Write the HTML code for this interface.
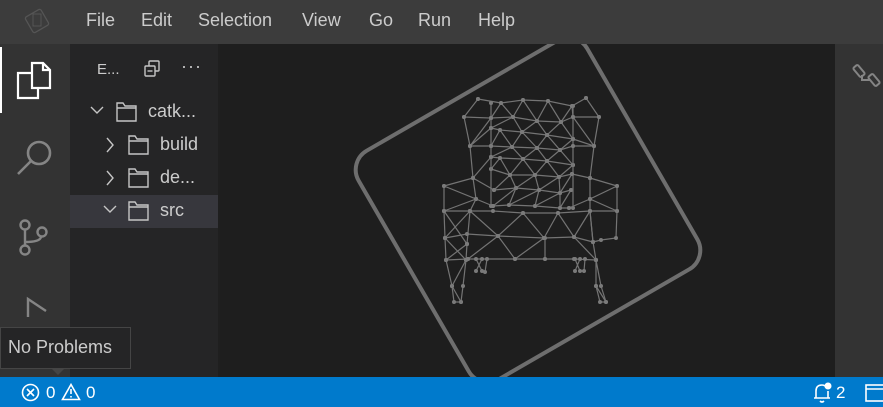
<!DOCTYPE html>
<html><head><meta charset="utf-8"><style>
*{margin:0;padding:0;box-sizing:border-box}
body{width:883px;height:407px;overflow:hidden;background:#1e1e1e;font-family:"Liberation Sans",Arial,sans-serif;position:relative}
.abs{position:absolute}
#title{left:0;top:0;width:883px;height:44px;background:#3c3c3c}
.menu{top:10px;font-size:18px;color:#cccccc}
#act{left:0;top:44px;width:70px;height:333px;background:#333333}
#side{left:70px;top:44px;width:150px;height:333px;background:#252526}
#right{left:835px;top:44px;width:48px;height:333px;background:#333333}
#status{left:0;top:377px;width:883px;height:30px;background:#007acc;color:#fff;font-size:17px}
</style></head><body>
<div id="title" class="abs"></div>
<svg class="abs" style="left:20px;top:4px" width="34" height="34" viewBox="0 0 34 34"><rect x="8" y="8" width="18" height="18" rx="2" transform="rotate(-30 17 17)" fill="none" stroke="#555" stroke-width="1.3"/><rect x="13" y="10" width="8" height="12" fill="none" stroke="#555" stroke-width="1"/></svg>
<div class="abs menu" style="left:86px">File</div>
<div class="abs menu" style="left:141px">Edit</div>
<div class="abs menu" style="left:198px">Selection</div>
<div class="abs menu" style="left:302px">View</div>
<div class="abs menu" style="left:369px">Go</div>
<div class="abs menu" style="left:418px">Run</div>
<div class="abs menu" style="left:478px">Help</div>

<div id="act" class="abs"></div>
<div class="abs" style="left:0;top:47px;width:2px;height:66px;background:#fff"></div>
<svg class="abs" style="left:14px;top:58px" width="40" height="44" viewBox="0 0 40 44" fill="none" stroke="#fff" stroke-width="2.2"><path d="M18 5 H29 L36 12 V30 H18 Z"/><path d="M29 5 V12 H36"/><path d="M18 15 H4 V40 H24 V30"/></svg>
<svg class="abs" style="left:14px;top:136px" width="42" height="42" viewBox="0 0 42 42" fill="none" stroke="#858585" stroke-width="2.6"><circle cx="25" cy="17" r="11"/><path d="M17 25 L4 38"/></svg>
<svg class="abs" style="left:16px;top:218px" width="34" height="40" viewBox="0 0 34 40" fill="none" stroke="#858585" stroke-width="2.4"><circle cx="9" cy="7" r="4.5"/><circle cx="9" cy="32" r="4.5"/><circle cx="26" cy="14" r="4.5"/><path d="M9 12 V27 M9 24 Q24 24 25 19"/></svg>
<svg class="abs" style="left:22px;top:295px" width="30" height="30" viewBox="0 0 30 30" fill="none" stroke="#858585" stroke-width="2.4"><path d="M6 22 V4 L24 16"/></svg>

<div id="side" class="abs"></div>
<div class="abs" style="left:97px;top:61px;color:#cccccc;font-size:15px">E...</div>
<svg class="abs" style="left:141px;top:58px" width="22" height="22" viewBox="0 0 22 22" fill="none" stroke="#c5c5c5" stroke-width="1.4"><rect x="8" y="3" width="10" height="10" rx="1"/><rect x="4" y="8" width="10" height="10" rx="1" fill="#252526"/><path d="M6.5 13 H11.5"/></svg>
<div class="abs" style="left:181px;top:56px;color:#c5c5c5;font-size:18px;letter-spacing:1px">···</div>
<div class="abs" style="left:70px;top:195px;width:150px;height:33px;background:#37373d"></div>
<div class="abs" style="left:218px;top:44px;width:2px;height:333px;background:#1f1f1f"></div>

<svg class="abs" style="left:70px;top:95px" width="150" height="140" viewBox="0 0 150 140" fill="none" stroke="#c5c5c5" stroke-width="1.4">
<path d="M21 12 L27 18 L33 12"/><path d="M47 8 H53 L55 11 H66 V26 H47 Z M47 13 H66"/>
<path d="M37 43 L43 50 L37 57"/><path d="M59 41 H65 L67 44 H78 V59 H59 Z M59 46 H78"/>
<path d="M37 76 L43 83 L37 90"/><path d="M59 74 H65 L67 77 H78 V92 H59 Z M59 79 H78"/>
<path d="M34 111 L40 117 L46 111"/><path d="M59 107 H65 L67 110 H78 V125 H59 Z M59 112 H78"/>
</svg>
<div class="abs" style="left:148px;top:101px;color:#ccc;font-size:18px">catk...</div>
<div class="abs" style="left:160px;top:134px;color:#ccc;font-size:18px">build</div>
<div class="abs" style="left:160px;top:167px;color:#ccc;font-size:18px">de...</div>
<div class="abs" style="left:160px;top:200px;color:#ccc;font-size:18px">src</div>

<div id="right" class="abs"></div>
<svg class="abs" style="left:850px;top:60px" width="33" height="34" viewBox="0 0 33 34" fill="none" stroke="#858585" stroke-width="2"><rect x="6" y="5" width="6" height="12" rx="1.5" transform="rotate(-40 9 11)"/><rect x="21" y="14" width="6" height="12" rx="1.5" transform="rotate(-40 24 20)"/><path d="M12 15 V20 H20"/></svg>

<svg class="abs" style="left:220px;top:44px" width="615" height="333" viewBox="220 44 615 333">
<defs><marker id="d" viewBox="0 0 4 4" refX="2" refY="2" markerWidth="4" markerHeight="4" markerUnits="userSpaceOnUse"><circle cx="2" cy="2" r="2" fill="#7a7a7a"/></marker></defs>
<rect x="396" y="78" width="264" height="264" rx="22" transform="rotate(-30 528 210)" fill="none" stroke="#6e6e6e" stroke-width="4"/>
<g fill="none" stroke="#747474" stroke-width="1.2" marker-start="url(#d)" marker-mid="url(#d)" marker-end="url(#d)">
<path d="M478 99 L501 103 L523 100 L548 101 L572 106 L586 98"/>
<path d="M491 118 L513 117 L537 121 L561 122 L573 117"/>
<path d="M491 128 L500 130 L522 132 L547 135 L573 139"/>
<path d="M491 146 L512 147 L537 148 L560 150 L573 146"/>
<path d="M491 157 L500 158 L523 159 L547 161 L573 165"/>
<path d="M491 169 L510 175 L535 175 L559 177 L572 174"/>
<path d="M494 190 L516 188 L539 190 L560 193 L571 190"/>
<path d="M493 206 L509 205 L535 206 L560 208 L569 208"/>
<path d="M491 118 L501 103 L513 117 L523 100 L537 121 L548 101 L561 122 L572 106 L573 117"/>
<path d="M491 128 L513 117 L522 132 L537 121 L547 135 L561 122 L573 139"/>
<path d="M491 146 L500 130 L512 147 L522 132 L537 148 L547 135 L560 150 L573 139"/>
<path d="M491 157 L512 147 L523 159 L537 148 L547 161 L560 150 L573 165"/>
<path d="M491 169 L500 158 L510 175 L523 159 L535 175 L547 161 L559 177 L573 165"/>
<path d="M494 190 L510 175 L516 188 L535 175 L539 190 L559 177 L560 193 L572 174"/>
<path d="M493 206 L516 188 L509 205 L539 190 L535 206 L560 193 L560 208 L571 190"/>
<path d="M491 103 V206 M573 106 V208"/>
<path d="M478 99 L464 117 L470 146 L473 178 L476 199 L470 211 L467 244 L466 260 L463 286 L461 302 L454 302 L452 286 L446 260 L445 238 L444 211 L444 186 L473 178"/>
<path d="M586 98 L599 117 L594 146 L590 178 L590 199 L590 211 L593 242 L596 260 L601 286 L606 302 L600 302 L596 286 L596 260 L593 242 L601 240 L616 238 L617 211 L617 186 L590 178"/>
<path d="M464 117 L491 118 L470 146 L491 128 M470 146 L491 146 M473 178 L491 157 M473 178 L494 190 M476 199 L493 206 M444 186 L476 199 L444 211"/>
<path d="M599 117 L573 117 L594 146 L573 139 M594 146 L573 146 M590 178 L572 174 M590 199 L569 208 M617 186 L590 199 L617 211"/>
<path d="M444 211 L470 211 L493 211 L523 213 L558 213 L590 211 L617 211"/>
<path d="M445 238 L467 234 L498 236 L544 238 L574 237 L593 242"/>
<path d="M446 260 L468 259 L515 259 L545 259 L574 259 L596 260"/>
<path d="M444 211 L467 244 M470 211 L445 238 M470 211 L498 236 L523 213 L544 238 L558 213 L574 237 L590 211 L593 242"/>
<path d="M467 244 L446 260 M498 236 L468 259 M498 236 L515 259 L544 238 M545 259 V238 M574 237 L596 260 M445 238 L466 260"/>
<path d="M452 286 L466 260 M461 302 L452 286 M596 286 L606 302"/>
<path d="M476 259 L482 271 L485 272 L487 259 M476 271 L482 259 M575 259 L580 271 L584 271 L585 259 M575 271 L580 259"/>
</g>
</svg>

<div class="abs" style="left:0;top:327px;width:131px;height:42px;background:#252526;border:1px solid #454545"></div>
<div class="abs" style="left:8px;top:337px;color:#ccc;font-size:18px">No Problems</div>
<div class="abs" style="left:52px;top:369px;width:0;height:0;border-left:6px solid transparent;border-right:6px solid transparent;border-top:6px solid #454545"></div>

<div id="status" class="abs"></div>
<svg class="abs" style="left:21px;top:383px" width="19" height="19" viewBox="0 0 19 19" fill="none" stroke="#fff" stroke-width="1.6"><circle cx="9.5" cy="9.5" r="8"/><path d="M6 6 L13 13 M13 6 L6 13"/></svg>
<div class="abs" style="left:46px;top:383px;color:#fff;font-size:17px">0</div>
<svg class="abs" style="left:61px;top:383px" width="20" height="18" viewBox="0 0 20 18" fill="none" stroke="#fff" stroke-width="1.6"><path d="M10 1.5 L18.5 16.5 H1.5 Z"/><path d="M10 6 V11 M10 13 V14.5"/></svg>
<div class="abs" style="left:86px;top:383px;color:#fff;font-size:17px">0</div>
<svg class="abs" style="left:812px;top:381px" width="22" height="24" viewBox="0 0 22 24" fill="none" stroke="#fff" stroke-width="1.6"><path d="M4 17 V10 Q4 4 10 4 Q12 4 13 5 M16 10 V17 M2 17 H18 M8 20 Q10 22 12 20"/><circle cx="16" cy="5" r="3.5" fill="#fff" stroke="none"/></svg>
<div class="abs" style="left:836px;top:383px;color:#fff;font-size:17px">2</div>
<svg class="abs" style="left:864px;top:383px" width="19" height="20" viewBox="0 0 19 20" fill="none" stroke="#fff" stroke-width="1.6"><rect x="2" y="2" width="20" height="16"/><path d="M2 6 H20"/></svg>
</body></html>
